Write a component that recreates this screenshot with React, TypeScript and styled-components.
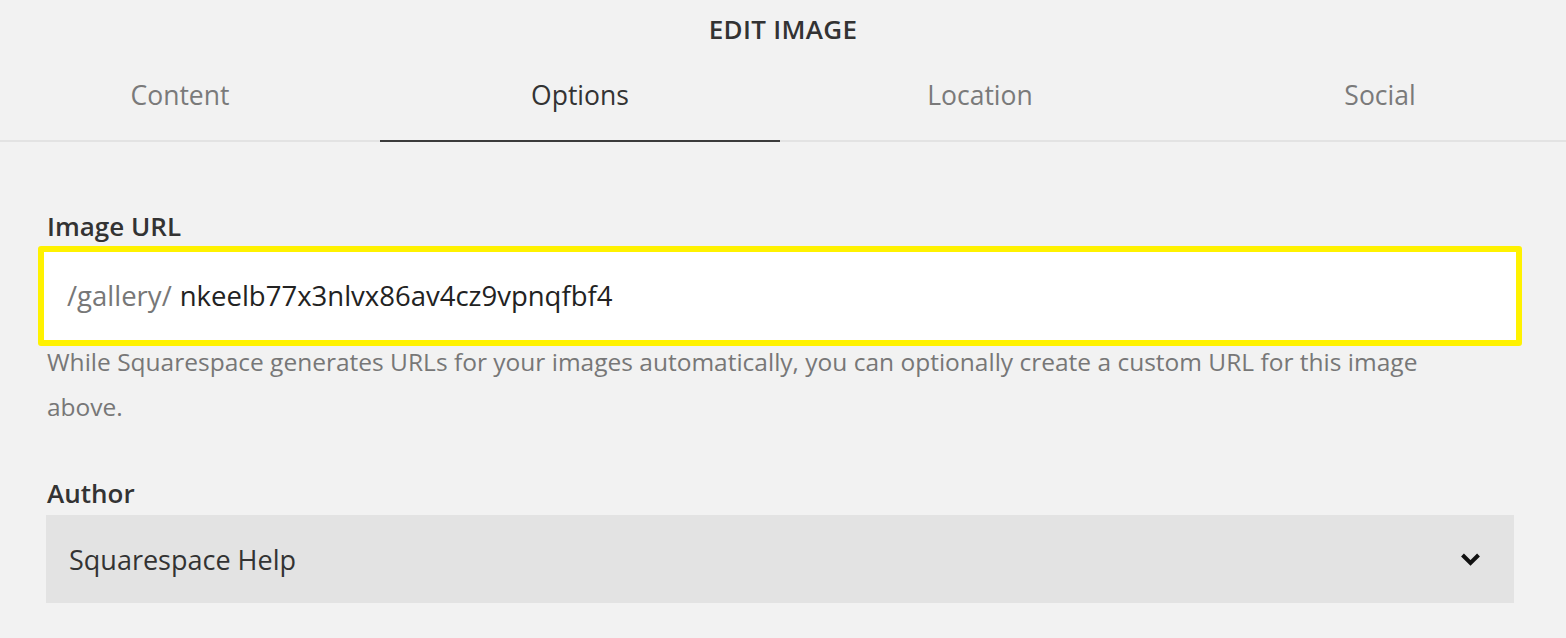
import React from "react";
import styled, { createGlobalStyle } from "styled-components";

const Global = createGlobalStyle`
  html, body { margin: 0; padding: 0; background: #f2f2f2; }
  body { font-family: "Open Sans", "Noto Sans", sans-serif; -webkit-font-smoothing: antialiased; }
  * { box-sizing: border-box; }
`;

const Panel = styled.div`
  width: 1566px;
  height: 638px;
  background: #f2f2f2;
  overflow: hidden;
  display: flex;
  flex-direction: column;
`;

const Title = styled.h1`
  margin: 0;
  height: 58px;
  display: flex;
  align-items: center;
  justify-content: center;
  font-size: 26px;
  font-weight: 600;
  letter-spacing: 0.3px;
  color: #333;
`;

const Tabs = styled.div`
  display: grid;
  grid-template-columns: repeat(4, 400px);
  margin-left: -20px;
  border-bottom: 2px solid #e3e3e3;
  height: 84px;
`;

const Tab = styled.div<{ $active?: boolean }>`
  display: flex;
  align-items: center;
  justify-content: center;
  font-size: 26.5px;
  color: ${(p) => (p.$active ? "#333" : "#7a7a7a")};
  border-bottom: 2px solid ${(p) => (p.$active ? "#3b3b3b" : "transparent")};
  margin-bottom: -2px;
  padding-bottom: 8px;
`;

const Body = styled.div`
  padding: 68px 52px 0 46px;
  display: flex;
  flex-direction: column;
`;

const Label = styled.div<{ $gap?: number; $after?: number }>`
  font-size: 26px;
  font-weight: 600;
  color: #333;
  line-height: 32px;
  height: 32px;
  flex: none;
  margin-top: ${(p) => p.$gap ?? 0}px;
  margin-bottom: ${(p) => p.$after ?? 4}px;
  padding-left: 1px;
`;

const UrlField = styled.div`
  margin: 0 -8px;
  height: 100px;
  flex: none;
  background: #fff;
  border: 6px solid #fff200;
  border-radius: 3px;
  display: flex;
  align-items: center;
  padding-left: 23px;
  padding-bottom: 2px;
  font-size: 27.5px;
`;

const Prefix = styled.span`
  color: #777;
  font-weight: 400;
  margin-right: 8px;
`;

const Slug = styled.span`
  color: #222;
`;

const Help = styled.p`
  margin: -7px 0 0 1px;
  font-size: 24.5px;
  line-height: 45px;
  color: #777;
  max-width: 1440px;
`;

const Select = styled.div`
  height: 88px;
  flex: none;
  background: #e3e3e3;
  display: flex;
  align-items: center;
  justify-content: space-between;
  padding: 0 33px 0 23px;
  font-size: 27px;
  color: #333;
`;

const Chevron = () => (
  <svg width="21" height="15" viewBox="0 0 21 15">
    <path d="M2.5 3 L10.5 11 L18.5 3" fill="none" stroke="#111" strokeWidth="4" />
  </svg>
);

export default function App() {
  return (
    <Panel>
      <Global />
      <Title>EDIT IMAGE</Title>
      <Tabs>
        <Tab>Content</Tab>
        <Tab $active>Options</Tab>
        <Tab>Location</Tab>
        <Tab>Social</Tab>
      </Tabs>
      <Body>
        <Label>Image URL</Label>
        <UrlField>
          <Prefix>/gallery/</Prefix>
          <Slug>nkeelb77x3nlvx86av4cz9vpnqfbf4</Slug>
        </UrlField>
        <Help>
          While Squarespace generates URLs for your images automatically, you can optionally create a
          custom URL for this image above.
        </Help>
        <Label $gap={48} $after={6}>Author</Label>
        <Select>
          <span>Squarespace Help</span>
          <Chevron />
        </Select>
      </Body>
    </Panel>
  );
}
